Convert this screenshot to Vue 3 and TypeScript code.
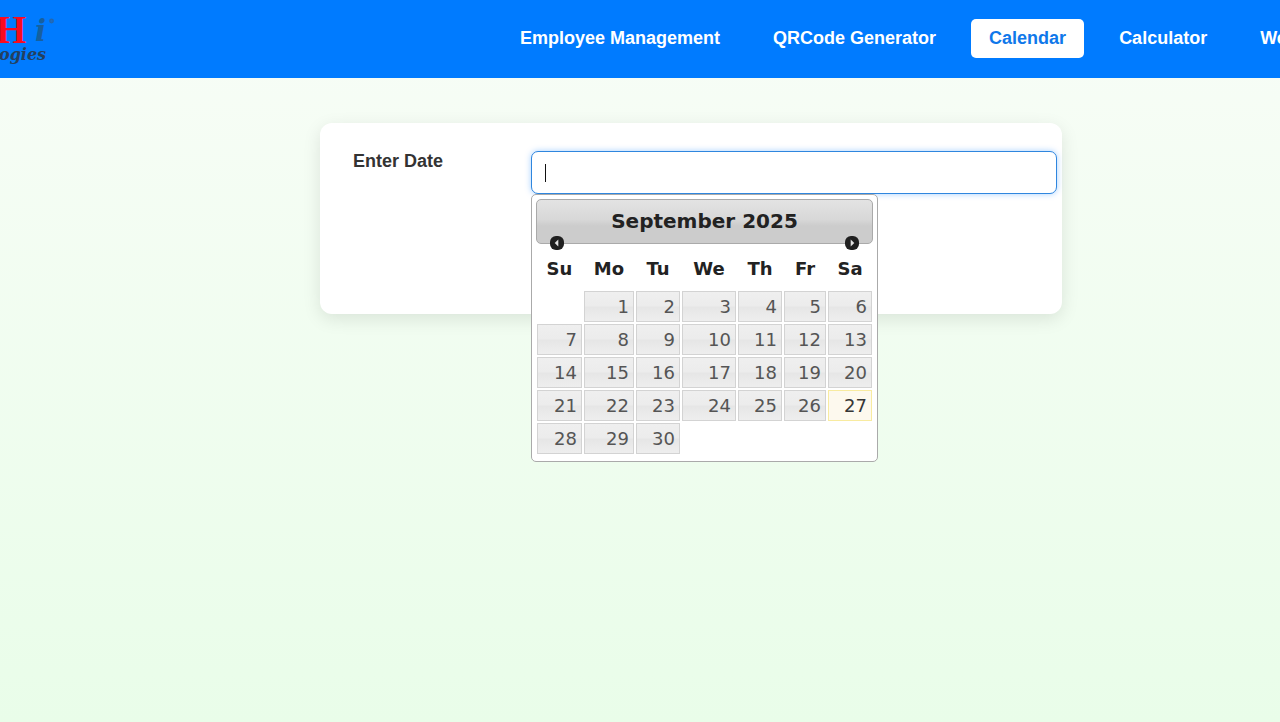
<script setup lang="ts">
import { computed, ref } from 'vue'

interface NavItem {
  label: string
  active?: boolean
}

const navItems: NavItem[] = [
  { label: 'Employee Management' },
  { label: 'QRCode Generator' },
  { label: 'Calendar', active: true },
  { label: 'Calculator' },
  { label: 'We' },
]

const dayNames = ['Su', 'Mo', 'Tu', 'We', 'Th', 'Fr', 'Sa']
const monthNames = [
  'January', 'February', 'March', 'April', 'May', 'June',
  'July', 'August', 'September', 'October', 'November', 'December',
]

const today = { year: 2025, month: 8, day: 27 }
const year = ref(2025)
const month = ref(8)
const date = ref('')

const weeks = computed<(number | null)[][]>(() => {
  const lead = new Date(year.value, month.value, 1).getDay()
  const count = new Date(year.value, month.value + 1, 0).getDate()
  const cells: (number | null)[] = Array(lead).fill(null)
  for (let d = 1; d <= count; d++) cells.push(d)
  while (cells.length % 7) cells.push(null)
  const rows: (number | null)[][] = []
  for (let i = 0; i < cells.length; i += 7) rows.push(cells.slice(i, i + 7))
  return rows
})

function isToday(day: number): boolean {
  return year.value === today.year && month.value === today.month && day === today.day
}

function shift(step: number): void {
  const next = new Date(year.value, month.value + step, 1)
  year.value = next.getFullYear()
  month.value = next.getMonth()
}

function pick(day: number): void {
  const mm = String(month.value + 1).padStart(2, '0')
  date.value = `${mm}/${String(day).padStart(2, '0')}/${year.value}`
}
</script>

<template>
  <div class="page">
    <header class="topbar">
      <a class="brand" href="#">
        <svg width="60" height="77" viewBox="0 0 60 77">
          <text class="logo-h" x="-4" y="43">H</text>
          <text class="logo-i" x="35" y="41">i</text>
          <circle cx="51.500" cy="21" r="1.800" fill="#1f6dc0" stroke="#2467ad" stroke-width="1.200" />
          <text class="logo-sub" x="-1" y="60">ogies</text>
        </svg>
      </a>
      <nav class="nav">
        <a
          v-for="item in navItems"
          :key="item.label"
          href="#"
          class="nav-link"
          :class="{ active: item.active }"
        >{{ item.label }}</a>
      </nav>
    </header>

    <main class="card">
      <label class="label" for="date">Enter Date</label>
      <div class="field">
        <input id="date" v-model="date" class="input" type="text" autocomplete="off" />
        <span v-if="!date" class="caret"></span>

        <div class="picker">
          <div class="picker-head">
            <button class="step prev" type="button" aria-label="Prev" @click="shift(-1)">
              <svg width="14" height="14" viewBox="0 0 14 14">
                <rect width="14" height="14" rx="6" fill="#202020" />
                <path d="M8.300 3.500v7L4.700 7z" fill="#e4e4e4" />
              </svg>
            </button>
            <div class="picker-title">{{ monthNames[month] }} {{ year }}</div>
            <button class="step next" type="button" aria-label="Next" @click="shift(1)">
              <svg width="14" height="14" viewBox="0 0 14 14">
                <rect width="14" height="14" rx="6" fill="#202020" />
                <path d="M5.700 3.500v7L9.300 7z" fill="#e4e4e4" />
              </svg>
            </button>
          </div>
          <table class="grid">
            <colgroup>
              <col v-for="name in dayNames" :key="name" :class="'col-' + name.toLowerCase()" />
            </colgroup>
            <thead>
              <tr>
                <th v-for="name in dayNames" :key="name" scope="col">{{ name }}</th>
              </tr>
            </thead>
            <tbody>
              <tr v-for="(week, w) in weeks" :key="w">
                <td v-for="(day, d) in week" :key="d">
                  <a
                    v-if="day"
                    href="#"
                    class="day"
                    :class="{ today: isToday(day) }"
                    @click.prevent="pick(day)"
                  >{{ day }}</a>
                </td>
              </tr>
            </tbody>
          </table>
        </div>
      </div>
    </main>
  </div>
</template>

<style>
body {
  margin: 0;
}
</style>

<style scoped>
.page {
  box-sizing: border-box;
  min-height: 100vh;
  overflow: hidden;
  background: linear-gradient(180deg, #f8fdf7, #e9fde9);
  font-family: "Liberation Sans", Arial, sans-serif;
}

.topbar {
  box-sizing: border-box;
  display: flex;
  align-items: center;
  height: 78px;
  padding-bottom: 2px;
  overflow: hidden;
  background: #007bff;
}

.brand {
  flex: 0 0 502px;
}

.brand svg {
  display: block;
}

.logo-h {
  font: bold 39px "Liberation Serif", serif;
  fill: #fa0a1e;
}

.logo-i {
  font: italic bold 29px "DejaVu Serif", serif;
  fill: #16609f;
}

.logo-sub {
  font: italic bold 16px "DejaVu Serif", serif;
  fill: #24405f;
}

.nav {
  display: flex;
  flex: none;
  gap: 17px;
}

.nav-link {
  padding: 9px 18px;
  border-radius: 5px;
  color: #fff;
  font-size: 18px;
  font-weight: bold;
  line-height: 21px;
  text-decoration: none;
  white-space: nowrap;
}

.nav-link.active {
  background: #fff;
  color: #0f78ea;
}

.card {
  box-sizing: border-box;
  display: grid;
  grid-template-columns: 178px 1fr;
  width: 58%;
  margin: 45px 0 0 25%;
  padding: 28px 5px 120px 33px;
  border-radius: 12px;
  background: #fff;
  box-shadow: 0 5px 18px rgba(0, 0, 0, 0.1);
}

.label {
  color: #333;
  font-size: 18px;
  font-weight: bold;
  line-height: 20px;
}

.field {
  position: relative;
}

.input {
  box-sizing: border-box;
  display: block;
  width: 100%;
  height: 43px;
  padding: 0 13px;
  border: 1px solid #2f86de;
  border-radius: 7px;
  outline: none;
  background: #fff;
  box-shadow: 0 0 6px rgba(0, 123, 255, 0.35);
  color: #222;
  font-family: inherit;
  font-size: 18px;
}

.caret {
  position: absolute;
  top: 13px;
  left: 14px;
  width: 1px;
  height: 18px;
  background: #111;
  pointer-events: none;
}

.picker {
  position: absolute;
  top: 43px;
  left: 0;
  box-sizing: border-box;
  width: 347px;
  padding: 4px 4px 6px;
  border: 1px solid #aaa;
  border-radius: 5px;
  background: #fff;
  color: #222;
  font-family: Verdana, "DejaVu Sans", sans-serif;
}

.picker-head {
  position: relative;
  box-sizing: border-box;
  height: 45px;
  border: 1px solid #aaa;
  border-radius: 5px;
  background: linear-gradient(180deg, #e3e3e3, #d8d8d8 45%, #cccccc 60%, #cccccc);
}

.picker-title {
  font-size: 20px;
  font-weight: bold;
  line-height: 43px;
  text-align: center;
}

.step {
  position: absolute;
  top: 36px;
  padding: 0;
  border: 0;
  background: none;
  cursor: pointer;
}

.step svg {
  display: block;
}

.prev {
  left: 13px;
}

.next {
  right: 13px;
}

.grid {
  width: 100%;
  border-collapse: collapse;
  table-layout: fixed;
  font-size: 18px;
}

.col-su {
  width: 47px;
}

.col-mo {
  width: 52px;
}

.col-tu,
.col-th,
.col-sa {
  width: 46px;
}

.col-we {
  width: 56px;
}

.col-fr {
  width: 44px;
}

th {
  box-sizing: border-box;
  height: 46px;
  padding: 3px 0 0;
  font-weight: bold;
  text-align: center;
}

td {
  height: 31px;
  padding: 1px;
}

.day {
  box-sizing: border-box;
  display: block;
  height: 31px;
  padding: 0 4px;
  border: 1px solid #d3d3d3;
  background: linear-gradient(180deg, #efefef, #ececec 48%, #e6e6e6 52%, #eeeeee);
  color: #555;
  line-height: 30px;
  text-align: right;
  text-decoration: none;
}

.day.today {
  border-color: #f8eba0;
  background: #fdf9ee;
  color: #363636;
}
</style>
